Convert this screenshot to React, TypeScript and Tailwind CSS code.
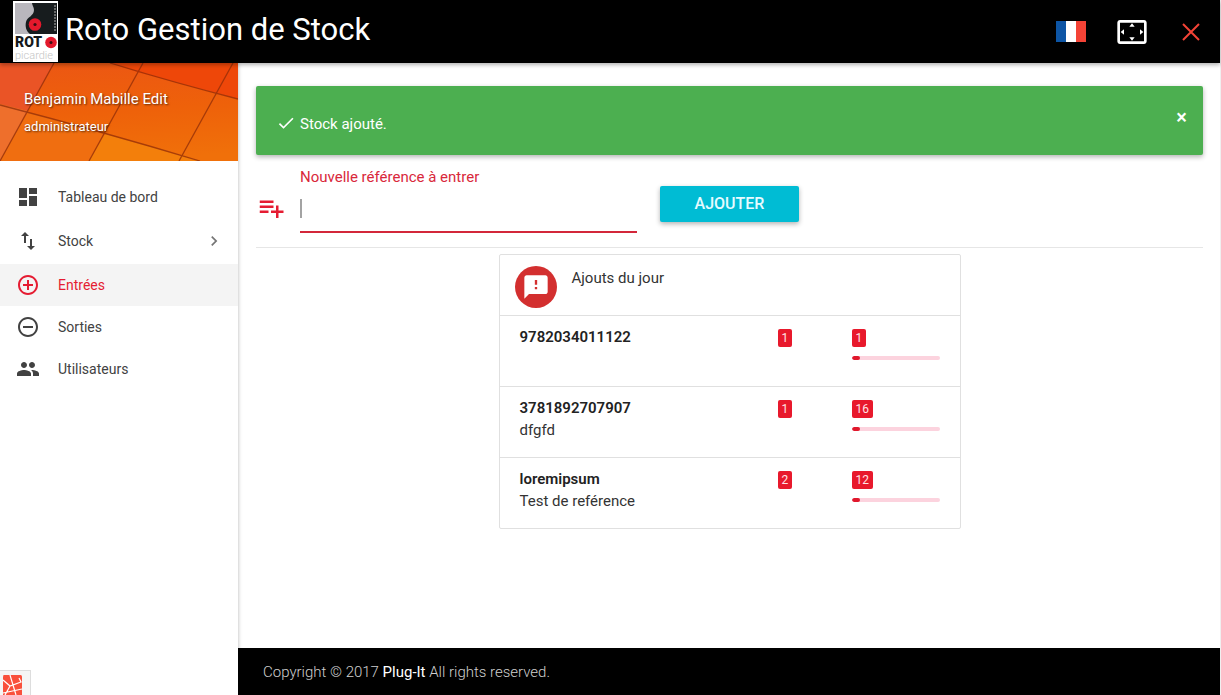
import React from "react";
import type { IconType } from "react-icons";
import {
  MdAddCircleOutline,
  MdCheck,
  MdChevronRight,
  MdDashboard,
  MdFeedback,
  MdPeople,
  MdPlaylistAdd,
  MdRemoveCircleOutline,
  MdSettingsOverscan,
  MdSwapVert,
} from "react-icons/md";

type NavItem = { label: string; icon: IconType; active?: boolean; expandable?: boolean };

const mainNav: NavItem[] = [
  { label: "Tableau de bord", icon: MdDashboard },
  { label: "Stock", icon: MdSwapVert, expandable: true },
];

const actionNav: NavItem[] = [
  { label: "Entrées", icon: MdAddCircleOutline, active: true },
  { label: "Sorties", icon: MdRemoveCircleOutline },
  { label: "Utilisateurs", icon: MdPeople },
];

const entries = [
  { reference: "9782034011122", name: "", added: 1, total: 1 },
  { reference: "3781892707907", name: "dfgfd", added: 1, total: 16 },
  { reference: "loremipsum", name: "Test de reférence", added: 2, total: 12 },
];

function Logo() {
  return (
    <svg className="h-[61px] w-[45px] shrink-0" viewBox="0 0 45 61" role="img" aria-label="Roto Picardie">
      <rect width="45" height="61" fill="#fff" />
      <rect x="2" y="2" width="42" height="31" fill="#b9b7bd" />
      <path d="M19 2H44V33H17C13 30 12 25 13 21C14 16 21 15 21 9C21 6 19 4 19 2Z" fill="#171c1e" />
      <path d="M42 4V31" stroke="#8b8b8b" strokeWidth="1.4" strokeDasharray="2 1" />
      <circle cx="22" cy="23.5" r="6.3" fill="#e4192c" />
      <circle cx="22" cy="23.5" r="1.6" fill="#3a0d12" />
      <text x="2" y="46" fontFamily="Roboto, sans-serif" fontWeight="900" fontSize="14" fill="#16191b">ROT</text>
      <circle cx="38" cy="41.5" r="5.8" fill="#e4192c" />
      <circle cx="38" cy="41.5" r="1.5" fill="#3a0d12" />
      <text x="2" y="58" fontFamily="Roboto, sans-serif" fontWeight="300" fontSize="11" fill="#c4c4c4">picardie</text>
    </svg>
  );
}

function FrenchFlag() {
  return (
    <svg className="h-[21px] w-[30px]" viewBox="0 0 30 21" aria-hidden="true">
      <rect width="10" height="21" fill="#0d55a5" />
      <rect x="10" width="10" height="21" fill="#fff" />
      <rect x="20" width="10" height="21" fill="#f44336" />
    </svg>
  );
}

function TileBackdrop() {
  return (
    <svg className="absolute inset-0 size-full" viewBox="0 0 238 98" preserveAspectRatio="none" aria-hidden="true">
      <defs>
        <linearGradient id="tiles" x1="0.3" y1="0" x2="0.45" y2="1">
          <stop offset="0" stopColor="#ec5713" />
          <stop offset="0.5" stopColor="#ee610a" />
          <stop offset="1" stopColor="#f0700a" />
        </linearGradient>
      </defs>
      <rect width="238" height="98" fill="url(#tiles)" />
      <path d="M0 0H54L28 48L0 41Z" fill="#ea5426" />
      <path d="M0 41L28 48L0 98Z" fill="#ee6f2c" />
      <path d="M110 0H238V36L137 9Z" fill="#ee4709" />
      <path d="M28 49L105 71L89 98H0Z" fill="#f06e10" />
      <path d="M105 71L200 98H89Z" fill="#f37f0b" />
      <g stroke="#8f2c08" strokeOpacity="0.75" strokeWidth="1.3" fill="none">
        <path d="M54 0L0 98M143 0L89 98M233 0L179 98M110 0Q175 20 238 36M0 42Q100 68 200 98" />
      </g>
    </svg>
  );
}

function NavLink({ item }: { item: NavItem }) {
  const Icon = item.icon;
  return (
    <li>
      <a
        href="#"
        aria-current={item.active ? "page" : undefined}
        className={
          item.active
            ? "flex h-[42px] items-center gap-[18px] bg-[#f4f4f4] pr-[14px] pl-4 text-[#e51c32]"
            : "flex h-[42px] items-center gap-[18px] pr-[14px] pl-4 text-[#424242]"
        }
      >
        <Icon className="size-6 shrink-0" />
        <span className="grow">{item.label}</span>
        {item.expandable && <MdChevronRight className="size-5 text-[#757575]" />}
      </a>
    </li>
  );
}

function Badge({ value }: { value: number }) {
  return (
    <span className="block h-[18px] w-fit rounded-xs bg-[#e8192c] px-1 text-xs leading-[18px] text-[#ffe3e6]">
      {value}
    </span>
  );
}

export default function App() {
  return (
    <div className="relative flex min-h-screen flex-col border-r border-[#f0f0f0] bg-white font-['Roboto',sans-serif] text-[15px] text-[#333]">
      <header className="relative z-10 flex h-[63px] items-center justify-between bg-black pr-5 pl-[13px] text-white shadow-[0_2px_4px_rgba(0,0,0,0.3)]">
        <a href="#" className="flex items-center gap-[7px]">
          <Logo />
          <h1 className="pb-1 text-[31px] leading-9">Roto Gestion de Stock</h1>
        </a>
        <div className="flex items-center">
          <button type="button" aria-label="Français" className="mr-[30px]">
            <FrenchFlag />
          </button>
          <button type="button" aria-label="Plein écran" className="mr-[34px]">
            <MdSettingsOverscan className="size-8" />
          </button>
          <button type="button" aria-label="Déconnexion" className="text-[#f44336]">
            <svg className="size-[18px]" viewBox="0 0 18 18" aria-hidden="true">
              <path d="M1 1L17 17M17 1L1 17" stroke="currentColor" strokeWidth="2" />
            </svg>
          </button>
        </div>
      </header>

      <div className="flex grow">
        <aside className="z-[5] w-[238px] shrink-0 bg-white shadow-[0_0_4px_rgba(0,0,0,0.3)]">
          <div className="relative h-[98px] overflow-hidden">
            <TileBackdrop />
            <div className="relative px-6 pt-6 text-white [text-shadow:1px_1px_2px_rgba(0,0,0,0.6)]">
              <p className="leading-6">Benjamin Mabille Edit</p>
              <p className="pt-1 text-[13px] leading-6">administrateur</p>
            </div>
          </div>
          <nav className="pt-[15px] text-sm">
            <ul className="mb-[2px] flex flex-col gap-[2px]">
              {mainNav.map((item) => (
                <NavLink key={item.label} item={item} />
              ))}
            </ul>
            <ul>
              {actionNav.map((item) => (
                <NavLink key={item.label} item={item} />
              ))}
            </ul>
          </nav>
        </aside>

        <div className="flex min-w-0 grow flex-col">
          <main className="grow pt-[23px] pr-[17px] pl-[18px]">
            <div
              role="status"
              className="flex h-[69px] items-center rounded-xs bg-[#4caf50] pr-4 pl-5 text-white shadow-[0_2px_5px_rgba(0,0,0,0.3)]"
            >
              <MdCheck className="mt-1 size-5 shrink-0 stroke-current" />
              <p className="mt-2 grow pl-1">Stock ajouté.</p>
              <button type="button" aria-label="Fermer" className="mb-2 text-xl leading-6 font-medium">
                ×
              </button>
            </div>

            <form className="flex items-start border-b border-[#e6e6e6] pb-[14px]">
              <MdPlaylistAdd className="mt-[38px] size-[30px] shrink-0 text-[#e51c32]" />
              <div className="relative ml-[14px] w-[337px] pt-3 text-[#d9283b]">
                <label htmlFor="reference" className="block leading-5">
                  Nouvelle référence à entrer
                </label>
                <input
                  id="reference"
                  type="text"
                  className="block h-[46px] w-full border-b-2 border-[#d3273a] text-base text-[#333] outline-none"
                />
                <span aria-hidden="true" className="absolute bottom-[15px] left-0 h-[19px] w-[2px] bg-[#a3a3a3]" />
              </div>
              <button
                type="submit"
                className="mt-[31px] ml-[23px] h-9 w-[139px] rounded-xs bg-[#00bcd4] text-base font-medium text-[#e6fbff] shadow-[0_2px_5px_rgba(0,0,0,0.3)]"
              >
                AJOUTER
              </button>
            </form>

            <section className="mx-auto mt-[6px] w-full max-w-[462px] rounded-xs border border-[#e0e0e0]">
              <div className="flex h-[61px] border-b border-[#e0e0e0] pt-[11px] pl-[15px]">
                <span className="flex size-[42px] items-center justify-center rounded-full bg-[#d32f2f] text-white">
                  <MdFeedback className="size-7" />
                </span>
                <h2 className="pl-[15px] leading-6">Ajouts du jour</h2>
              </div>
              <ul className="divide-y divide-[#e0e0e0]">
                {entries.map((entry) => (
                  <li key={entry.reference} className="flex min-h-[71px] items-start px-5 pt-[10px] last:min-h-[70px]">
                    <div className="grow">
                      <p className="leading-[22px] font-semibold text-[#222]">{entry.reference}</p>
                      <p className="leading-[22px]">{entry.name}</p>
                    </div>
                    <div className="w-[74px] pt-[3px]">
                      <Badge value={entry.added} />
                    </div>
                    <div className="w-[88px] pt-[3px]">
                      <Badge value={entry.total} />
                      <div className="mt-[9px] h-1 overflow-hidden rounded-xs bg-[#fcd3de]">
                        <div className="h-full w-1/10 rounded-xs bg-[#e0182c]" />
                      </div>
                    </div>
                  </li>
                ))}
              </ul>
            </section>
          </main>

          <footer className="bg-black pt-3 pr-6 pb-[11px] pl-[25px] leading-6 font-light text-[#cfcfcf]">
            Copyright © 2017{" "}
            <a href="#" className="font-normal text-white">
              Plug-It
            </a>{" "}
            All rights reserved.
          </footer>
        </div>
      </div>

      <button
        type="button"
        aria-label="Barre de débogage"
        className="absolute bottom-0 left-0 z-20 h-[25px] w-[31px] overflow-hidden border-t border-r border-[#ddd] bg-[#f5f5f5]"
      >
        <svg className="mt-1 ml-[2px] h-5 w-[22px]" viewBox="0 0 22 20" aria-hidden="true">
          <path d="M1.500 0H18.500Q20 0 20 1.500V20H1V2Z" fill="#f9503c" />
          <path d="M1 5L8 11L19 7L17 3M8 0L14 20M8 11L3 20M1 18L20 14" stroke="#fff" strokeWidth="1.2" fill="none" />
        </svg>
      </button>
    </div>
  );
}
